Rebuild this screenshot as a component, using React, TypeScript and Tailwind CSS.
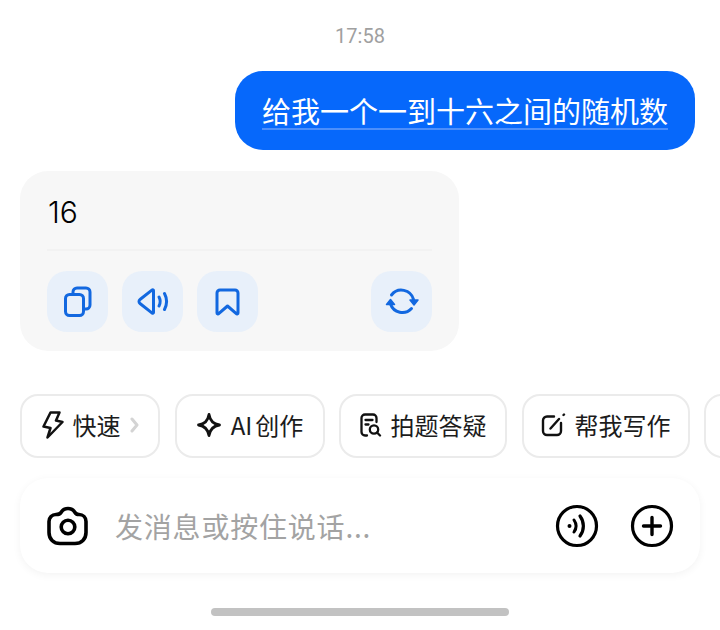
import React from "react";

const blue = "#1268e0";

function Chip({ icon, label, w, extra }: { icon?: React.ReactNode; label?: React.ReactNode; w: string; extra?: React.ReactNode }) {
  return (
    <div className={`${w} h-[64px] shrink-0 rounded-[18px] border-2 border-[#ebebeb] bg-white flex items-center justify-center gap-[9px] pb-[2px] text-[24px] leading-none text-[#1c1c1c]`}>
      {icon}
      {label && <span className="whitespace-nowrap">{label}</span>}
      {extra}
    </div>
  );
}

function ActionBtn({ children, className = "" }: { children: React.ReactNode; className?: string }) {
  return <div className={`w-[61px] h-[61px] rounded-[20px] bg-[#e8f0fa] flex items-center justify-center ${className}`}>{children}</div>;
}

export default function App() {
  return (
    <div className="w-[720px] h-[630px] bg-white overflow-hidden flex flex-col font-['Noto_Sans_CJK_SC','Noto_Sans',sans-serif]">
      <div className="h-[71px] pt-[22px] text-center text-[20px] leading-[28px] text-[#a0a0a0] font-['Roboto',sans-serif]">17:58</div>

      <div className="flex justify-end pr-[25px]">
        <div className="w-[460px] h-[79px] rounded-[28px] bg-[#0668fb] flex items-center justify-center pt-[1px]">
          <span className="text-[29px] leading-[36px] text-white whitespace-nowrap border-b-2 border-[#4d8ffb]">给我一个一到十六之间的随机数</span>
        </div>
      </div>

      <div className="ml-[20px] mt-[21px] w-[439px] h-[180px] rounded-[28px] bg-[#f7f7f7] pl-[27px] pr-[27px]">
        <div className="h-[80px] border-b-2 border-[#f2f2f2] pt-[21px] pl-[1px] text-[30px] leading-[40px] text-black font-['Inter',sans-serif] font-light">16</div>
        <div className="flex items-center mt-[20px]">
          <ActionBtn>
            <svg width="28" height="31" viewBox="0 0 28 31" fill="none" stroke={blue} strokeWidth="3" strokeLinejoin="round">
              <rect x="1.500" y="8.500" width="18" height="21" rx="4" />
              <path d="M9 8.500V6a4 4 0 0 1 4-4h9a4 4 0 0 1 4 4v13a4 4 0 0 1-4 4h-2.500" />
            </svg>
          </ActionBtn>
          <ActionBtn className="ml-[14px]">
            <svg width="32" height="27" viewBox="0 0 32 27" fill="none" stroke={blue} strokeWidth="3" strokeLinecap="round" strokeLinejoin="round">
              <path d="M16.500 2.500v22a.8.8 0 0 1-1.300.6L3 15.500a2.500 2.500 0 0 1 0-4L15.200 1.900a.8.8 0 0 1 1.300.6Z" />
              <path d="M22 9c1.600 3 1.600 6 0 9" />
              <path d="M27.500 5.500c2.600 5 2.600 11 0 16" />
            </svg>
          </ActionBtn>
          <ActionBtn className="ml-[14px]">
            <svg width="25" height="28" viewBox="0 0 25 28" fill="none" stroke={blue} strokeWidth="3" strokeLinejoin="round">
              <path d="M5 2h15a3 3 0 0 1 3 3v20a1 1 0 0 1-1.700.7L12.500 18l-8.800 7.700A1 1 0 0 1 2 25V5a3 3 0 0 1 3-3Z" />
            </svg>
          </ActionBtn>
          <ActionBtn className="ml-auto">
            <svg width="34" height="30" viewBox="4 6 34 30" fill="none" stroke={blue} strokeWidth="3" strokeLinecap="round">
              <path d="M10.500 14A12.500 12.500 0 0 1 32.500 18.500" />
              <path d="M30.500 27.500A12.500 12.500 0 0 1 9.500 23" />
              <path d="M29 19h8l-4 5Z" fill={blue} strokeWidth="1.500" strokeLinejoin="round" />
              <path d="M5.500 23.500h8l-4-5Z" fill={blue} strokeWidth="1.500" strokeLinejoin="round" />
            </svg>
          </ActionBtn>
        </div>
      </div>

      <div className="mt-[43px] ml-[20px] flex gap-[14.5px] overflow-hidden">
        <Chip
          w="w-[140px]"
          label="快速"
          icon={
            <svg width="22" height="28" viewBox="0 0 22 28" fill="none" stroke="#111" strokeWidth="2.500" strokeLinejoin="round" strokeLinecap="round">
              <path d="M8.500 1.500h9l-3.500 8 6.500 1.500L5.500 26.500l3-9.500L1.500 15.500Z" />
            </svg>
          }
          extra={
            <svg width="9" height="16" viewBox="0 0 9 16" fill="none" stroke="#d4d4d4" strokeWidth="3" strokeLinecap="round" strokeLinejoin="round">
              <path d="m2 2 5 6-5 6" />
            </svg>
          }
        />
        <Chip
          w="w-[150px]"
          label={<>AI<span className="ml-[3px]">创作</span></>}
          icon={
            <svg width="26" height="26" viewBox="0 0 26 26" fill="none" stroke="#111" strokeWidth="2.800" strokeLinejoin="round">
              <path d="M13 2.500c1 6.500 4 9.500 10.500 10.500C17 14 14 17 13 23.500 12 17 9 14 2.500 13 9 12 12 9 13 2.500Z" />
            </svg>
          }
        />
        <Chip
          w="w-[168px]"
          label="拍题答疑"
          icon={
            <svg width="22" height="24" viewBox="0 0 22 24" fill="none" stroke="#111" strokeWidth="2.300" strokeLinecap="round" strokeLinejoin="round">
              <path d="M7 22.500H5a3.500 3.500 0 0 1-3.500-3.500V5A3.500 3.500 0 0 1 5 1.500h8A3.500 3.500 0 0 1 16.500 5v4" />
              <path d="M5.500 7h7M5.500 11.500h3" />
              <circle cx="14" cy="16.500" r="4.200" />
              <path d="m17 19.500 3 3" />
            </svg>
          }
        />
        <Chip
          w="w-[168px]"
          label="帮我写作"
          icon={
            <svg width="25" height="24" viewBox="0 0 25 24" fill="none" stroke="#111" strokeWidth="2.400" strokeLinecap="round" strokeLinejoin="round">
              <path d="M13 3.500H6a4 4 0 0 0-4 4V18a4 4 0 0 0 4 4h10a4 4 0 0 0 4-4V10" />
              <path d="m9.500 15.500 8.500-9.500M22.500 2l.5-.5" />
            </svg>
          }
        />
        <Chip w="w-[100px]" />
      </div>

      <div className="ml-[20px] mt-[20px] w-[680px] h-[95px] rounded-[28px] bg-white shadow-[0_2px_8px_rgba(0,0,0,0.05)] flex items-center pl-[27px] pr-[26px]">
        <svg width="42" height="40" viewBox="0 0 42 40" fill="none" stroke="#000" strokeWidth="3.600" strokeLinejoin="round">
          <path d="M14 6.500c1.500-2.500 3.500-4 7-4s5.500 1.500 7 4c1 1.700 2.500 2 4 2 4 0 7 3 7 7v11c0 6.500-4.500 11-11 11H13c-6.500 0-11-4.500-11-11v-11c0-4 3-7 7-7 1.500 0 4-.3 5-2Z" />
          <circle cx="21" cy="21" r="6.800" />
        </svg>
        <span className="ml-[26px] text-[28px] leading-[40px] text-[#a3a3a3] tracking-[0.8px]">发消息或按住说话...</span>
        <svg className="ml-auto" width="44" height="44" viewBox="0 0 44 44" fill="none" stroke="#000" strokeLinecap="round">
          <circle cx="22" cy="22" r="19.500" strokeWidth="3.200" />
          <circle cx="14.500" cy="22" r="2" fill="#000" stroke="none" />
          <path d="M19 16c2.800 4 2.800 8 0 12" strokeWidth="3" />
          <path d="M25 12c4.500 6 4.500 14 0 20" strokeWidth="3.200" />
        </svg>
        <svg className="ml-[31px]" width="44" height="44" viewBox="0 0 44 44" fill="none" stroke="#000" strokeLinecap="round">
          <circle cx="22" cy="22" r="19.500" strokeWidth="3.200" />
          <path d="M13.500 22h17M22 13.500v17" strokeWidth="3.400" />
        </svg>
      </div>

      <div className="mt-[35px] ml-[211px] w-[298px] h-[8px] rounded-full bg-[#c2c2c2]" />
    </div>
  );
}
